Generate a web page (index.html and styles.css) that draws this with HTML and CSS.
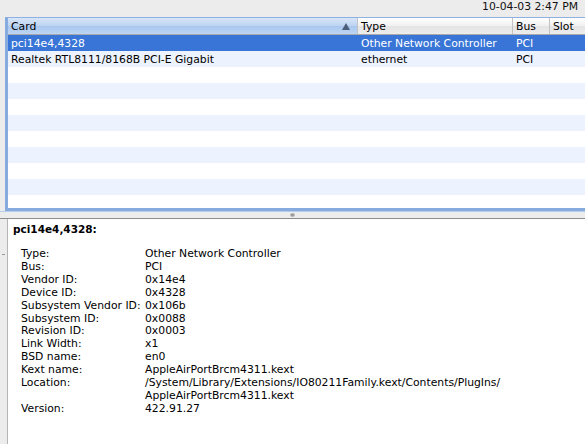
FILE: index.html
```html
<!DOCTYPE html>
<html>
<head>
<meta charset="utf-8">
<link rel="stylesheet" href="styles.css">
</head>
<body>
<div class="window">
  <div class="topbar">10-04-03 2:47 PM</div>
  <div class="tablebox">
    <div class="thead">
      <div class="th c-card sorted">Card<span class="arrow"></span></div>
      <div class="th c-type">Type</div>
      <div class="th c-bus">Bus</div>
      <div class="th c-slot">Slot</div>
    </div>
    <div class="tbody">
      <div class="tr selected">
        <div class="td c-card">pci14e4,4328</div>
        <div class="td c-type">Other Network Controller</div>
        <div class="td c-bus">PCI</div>
        <div class="td c-slot"></div>
      </div>
      <div class="tr">
        <div class="td c-card">Realtek RTL8111/8168B PCI-E Gigabit</div>
        <div class="td c-type">ethernet</div>
        <div class="td c-bus">PCI</div>
        <div class="td c-slot"></div>
      </div>
      <div class="tr"></div>
      <div class="tr"></div>
      <div class="tr"></div>
      <div class="tr"></div>
      <div class="tr"></div>
      <div class="tr"></div>
      <div class="tr"></div>
      <div class="tr"></div>
    </div>
  </div>
  <div class="splitter"><span class="dimple"></span></div>
  <div class="detail">
    <div class="grip"></div>
    <div class="dtitle">pci14e4,4328:</div>
    <div class="props">
      <div class="k">Type:</div><div class="v">Other Network Controller</div>
      <div class="k">Bus:</div><div class="v">PCI</div>
      <div class="k">Vendor ID:</div><div class="v">0x14e4</div>
      <div class="k">Device ID:</div><div class="v">0x4328</div>
      <div class="k">Subsystem Vendor ID:</div><div class="v">0x106b</div>
      <div class="k">Subsystem ID:</div><div class="v">0x0088</div>
      <div class="k">Revision ID:</div><div class="v">0x0003</div>
      <div class="k">Link Width:</div><div class="v">x1</div>
      <div class="k">BSD name:</div><div class="v">en0</div>
      <div class="k">Kext name:</div><div class="v">AppleAirPortBrcm4311.kext</div>
      <div class="k">Location:</div><div class="v">/System/Library/Extensions/IO80211Family.kext/Contents/PlugIns/<br>AppleAirPortBrcm4311.kext</div>
      <div class="k">Version:</div><div class="v">422.91.27</div>
    </div>
  </div>
</div>
</body>
</html>
```
FILE: styles.css
```css
* { box-sizing: border-box; }
html, body { margin: 0; padding: 0; }
body {
  width: 585px;
  height: 444px;
  overflow: hidden;
  background: #ececec;
  font-family: "DejaVu Sans", sans-serif;
  font-size: 10.8px;
  color: #000;
}
.window { display: flex; flex-direction: column; height: 444px; }
.topbar {
  height: 17px;
  line-height: 13px;
  text-align: right;
  padding-right: 7px;
  color: #111;
}
.tablebox {
  margin-left: 5px;
  height: 194px;
  border: 3px solid #87aadf;
  border-right: none;
  border-top: 1px solid #8fb1e2;
  background: #fff;
  overflow: hidden;
}
.thead {
  display: flex;
  height: 17px;
  background: linear-gradient(#ffffff, #f0f0f0 50%, #e4e4e4 51%, #ededed);
  border-bottom: 1px solid #a9a9a9;
}
.th {
  line-height: 17px;
  padding-left: 3px;
  border-right: 1px solid #c2c2c2;
  position: relative;
}
.th.sorted {
  background: linear-gradient(#d8e6f8, #bcd3f1 50%, #a8c6ee 51%, #bed6f5);
}
.arrow {
  position: absolute;
  right: 7px;
  top: 5px;
  width: 0; height: 0;
  border-left: 4px solid transparent;
  border-right: 4px solid transparent;
  border-bottom: 7px solid #4b5d77;
}
.c-card { width: 350px; flex: none; }
.c-type { width: 155px; flex: none; }
.c-bus { width: 37px; flex: none; }
.c-slot { flex: 1; border-right: none; }
.tr { display: flex; height: 16px; line-height: 17px; }
.tr:nth-child(even) { background: #edf3fe; }
.tr.selected { background: #3875d7; color: #fff; }
.td { padding-left: 3px; white-space: nowrap; overflow: hidden; }
.splitter {
  height: 8px;
  background: #ececec;
  border-top: 1px solid #b7cdee;
  border-bottom: 1px solid #8c8c8c;
  position: relative;
}
.dimple {
  position: absolute;
  left: 290px; top: 1px;
  width: 5px; height: 4px;
  border-radius: 50%;
  background: radial-gradient(#8a8a8a, #d0d0d0);
}
.detail {
  flex: 1;
  margin-left: 7px;
  background: #fff;
  border-left: 1px solid #b5b5b5;
  position: relative;
  padding: 3px 0 0 5px;
}
.grip {
  position: absolute;
  left: -6px; top: 35px;
  width: 3px; height: 1px;
  background: #9a9a9a;
}
.dtitle { font-weight: bold; font-size: 10.5px; height: 26px; line-height: 14px; }
.props {
  display: grid;
  grid-template-columns: 124px auto;
  padding-left: 8px;
  line-height: 12.9px;
}
```
